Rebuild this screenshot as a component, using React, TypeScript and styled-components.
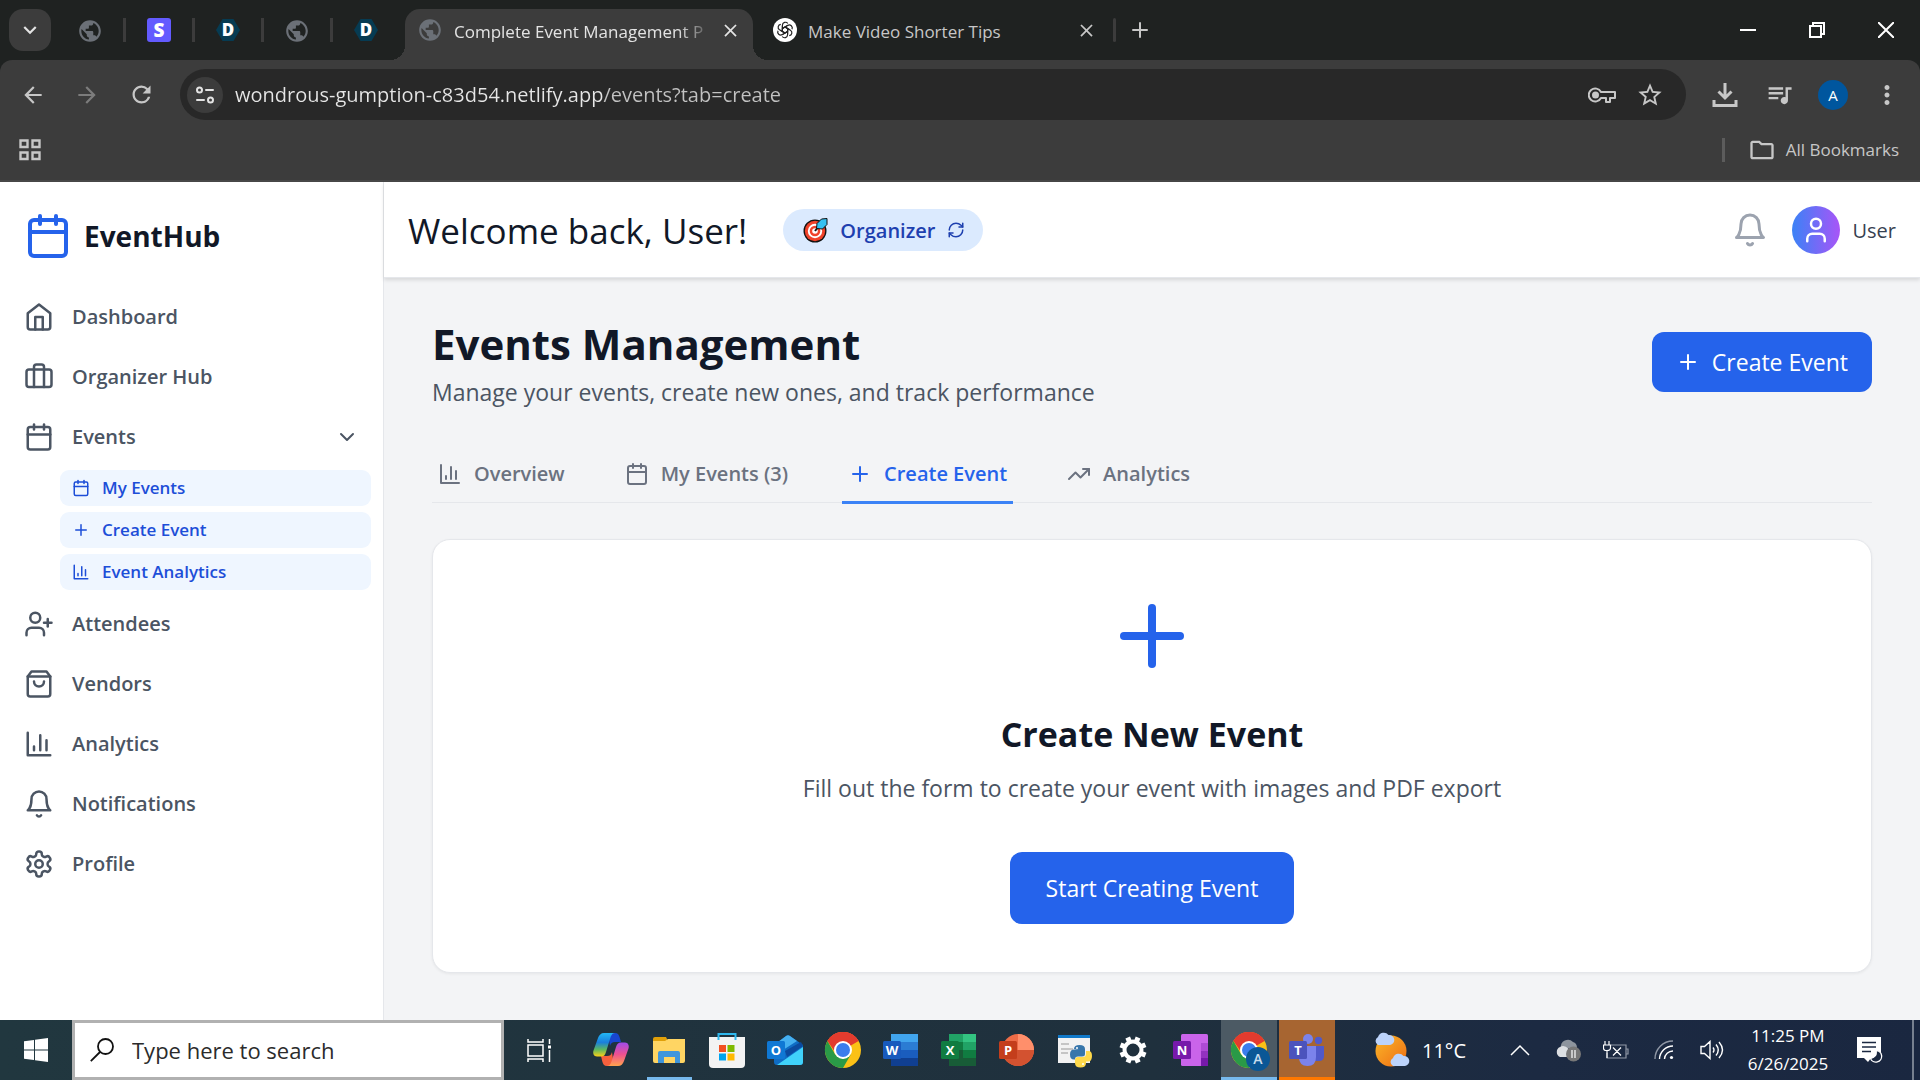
import React from "react";
import styled, { createGlobalStyle, css } from "styled-components";
import {
  Briefcase,
  Calendar,
  ChevronDown,
  Plus,
  RefreshCw,
  TrendingUp,
  User,
  UserPlus,
} from "lucide-react";
import { FiHome, FiShoppingBag } from "react-icons/fi";
import {
  MdArrowBack,
  MdArrowForward,
  MdClose,
  MdKeyboardArrowDown,
  MdMoreVert,
  MdOutlineFolder,
  MdPublic,
  MdQueueMusic,
  MdRefresh,
  MdStarBorder,
} from "react-icons/md";

const ui = `"Segoe UI", "Open Sans", "Noto Sans", sans-serif`;

const GlobalStyle = createGlobalStyle`
  *, *::before, *::after { box-sizing: border-box; }
  body { margin: 0; font-family: ${ui}; background: #f3f4f6; }
  button, input { font: inherit; color: inherit; border: 0; padding: 0; background: none; }
  button { cursor: pointer; }
  a { color: inherit; text-decoration: none; }
  h1, h2, p, ul { margin: 0; padding: 0; }
  ul { list-style: none; }
  svg { display: block; flex-shrink: 0; }
`;

const Screen = styled.div`
  display: flex;
  flex-direction: column;
  min-height: 100vh;
`;

/* ---------- Browser chrome ---------- */

const Browser = styled.header`
  background: #1f2221;
  color: #c7c7c7;
`;

const TabStrip = styled.div`
  display: flex;
  align-items: center;
  height: 60px;
  padding-left: 9px;
`;

const TabSearch = styled.button`
  display: grid;
  place-items: center;
  width: 42px;
  height: 42px;
  margin-right: 6px;
  border-radius: 14px;
  background: #3c3c3c;
  color: #e3e3e3;
`;

const PinnedTab = styled.button<{ $last?: boolean }>`
  display: grid;
  place-items: center;
  width: 69px;
  height: 24px;
  border-right: 3px solid ${(p) => (p.$last ? "transparent" : "#3c3c3c")};
`;

const Tab = styled.div<{ $active?: boolean }>`
  position: relative;
  display: flex;
  align-items: center;
  gap: 12px;
  width: 348px;
  height: 51px;
  margin: 9px 0 0 ${(p) => (p.$active ? 3 : 8)}px;
  padding: 0 12px;
  font-size: 17px;
  color: #c7c7c7;
  ${(p) =>
    p.$active &&
    css`
      color: #e3e3e3;
      background: #3c3c3c;
      border-radius: 15px 15px 0 0;
      &::before,
      &::after {
        content: "";
        position: absolute;
        bottom: 0;
        width: 15px;
        height: 15px;
      }
      &::before {
        right: 100%;
        background: radial-gradient(circle at 0 0, transparent 15px, #3c3c3c 15px);
      }
      &::after {
        left: 100%;
        background: radial-gradient(circle at 100% 0, transparent 15px, #3c3c3c 15px);
      }
    `}
`;

const TabBody = styled.button`
  display: flex;
  flex: 1;
  min-width: 0;
  align-items: center;
  gap: 11px;
  margin-top: -9px;
  text-align: left;
`;

const TabTitle = styled.span<{ $fade?: boolean }>`
  flex: 1;
  line-height: 30px;
  padding-top: 3px;
  white-space: nowrap;
  mask-image: ${(p) => (p.$fade ? "linear-gradient(to right, #000 88%, transparent 102%)" : "none")};
`;

const TabClose = styled.button`
  margin-top: -9px;
`;

const StripDivider = styled.span`
  width: 3px;
  height: 24px;
  margin: 0 12px 0 4px;
  border-radius: 2px;
  background: #3c3c3c;
`;

const WindowControls = styled.div`
  display: flex;
  margin-left: auto;
  color: #fff;
  button {
    display: grid;
    place-items: center;
    width: 69px;
    height: 58px;
  }
`;

const Toolbar = styled.div`
  background: #3c3c3c;
  border-bottom: 2px solid #474747;
  border-radius: 12px 12px 0 0;
`;

const AddressRow = styled.div`
  display: flex;
  align-items: center;
  padding: 9px 6px 0;
`;

const ToolButton = styled.button<{ $dim?: boolean }>`
  display: grid;
  place-items: center;
  width: 54px;
  height: 48px;
  color: ${(p) => (p.$dim ? "#7c7c7c" : "#c7c7c7")};
`;

const Omnibox = styled.div`
  display: flex;
  flex: 1;
  align-items: center;
  gap: 12px;
  height: 51px;
  margin: 0 12px;
  padding: 0 18px 0 7px;
  border-radius: 26px;
  background: #282828;
`;

const SiteInfo = styled.button`
  display: grid;
  place-items: center;
  width: 36px;
  height: 36px;
  border-radius: 50%;
  background: #3c3c3c;
  color: #e3e3e3;
`;

const Address = styled.input`
  flex: 1;
  min-width: 0;
  font-size: 20px;
  line-height: 30px;
  outline: 0;
  color: transparent;
  background: linear-gradient(to right, #e6e6e6 368px, #c2c2c2 368px);
  background-clip: text;
`;

const OmniButton = styled.button`
  display: grid;
  place-items: center;
  width: 36px;
  height: 36px;
`;

const Profile = styled.span`
  display: grid;
  place-items: center;
  width: 30px;
  height: 30px;
  border-radius: 50%;
  background: #00569e;
  color: #fff;
  font-size: 15px;
`;

const BookmarkRow = styled.div`
  display: flex;
  align-items: center;
  justify-content: space-between;
  height: 60px;
  padding: 0 21px 0 19px;
`;

const AllBookmarks = styled.button`
  display: flex;
  align-items: center;
  gap: 10px;
  padding-left: 23px;
  font-size: 17px;
  line-height: 30px;
  border-left: 3px solid #5c5c5c;
  height: 24px;
`;

/* ---------- Application ---------- */

const AppShell = styled.div`
  display: flex;
  flex: 1;
`;

const Sidebar = styled.aside`
  flex: 0 0 384px;
  padding: 27px 12px;
  background: #fff;
  border-right: 1px solid #e5e7eb;
`;

const Brand = styled.a`
  display: flex;
  align-items: center;
  gap: 12px;
  padding: 3px 12px 30px;
  font-size: 28px;
  font-weight: 700;
  line-height: 48px;
  color: #111827;
  svg {
    color: #2563eb;
  }
`;

const NavList = styled.ul`
  display: flex;
  flex-direction: column;
  gap: 6px;
`;

const navRow = css`
  display: flex;
  align-items: center;
  width: 100%;
  font-weight: 600;
  text-align: left;
`;

const NavLink = styled.a`
  ${navRow}
  gap: 18px;
  padding: 12px;
  font-size: 20px;
  line-height: 30px;
  color: #4b5563;
`;

const NavToggle = styled(NavLink).attrs({ as: "button" })`
  svg:last-child {
    margin-left: auto;
  }
`;

const SubList = styled(NavList)`
  padding: 6px 0 1px 48px;
`;

const SubLink = styled.a`
  ${navRow}
  gap: 12px;
  padding: 6px 12px;
  border-radius: 9px;
  background: #eff6ff;
  color: #1d4ed8;
  font-size: 17px;
  line-height: 24px;
`;

const Content = styled.div`
  display: flex;
  flex: 1;
  min-width: 0;
  flex-direction: column;
  background: #f3f4f6;
`;

const TopBar = styled.div`
  display: flex;
  align-items: center;
  height: 96px;
  padding: 1px 24px 0;
  background: #fff;
  border-bottom: 1px solid #e5e7eb;
  box-shadow: 0 2px 4px rgba(0, 0, 0, 0.12);
`;

const Welcome = styled.p`
  padding-top: 2px;
  font-size: 35px;
  line-height: 48px;
  font-weight: 500;
  color: #111827;
`;

const RolePill = styled.button`
  display: flex;
  align-items: center;
  gap: 12px;
  height: 42px;
  margin-left: 36px;
  padding: 0 18px 0 20px;
  border-radius: 21px;
  background: #dbeafe;
  color: #1e40af;
  font-size: 20px;
  font-weight: 600;
`;

const Account = styled.div`
  display: flex;
  align-items: center;
  gap: 24px;
  margin-left: auto;
  color: #9ca3af;
`;

const AccountButton = styled.button`
  display: flex;
  align-items: center;
  gap: 12px;
  font-size: 20px;
  font-weight: 500;
  color: #374151;
`;

const Avatar = styled.span`
  display: grid;
  place-items: center;
  width: 48px;
  height: 48px;
  border-radius: 50%;
  color: #fff;
  background: linear-gradient(to right, #3b82f6, #a855f7);
`;

const Main = styled.main`
  padding: 36px 48px 40px;
`;

const PageHead = styled.div`
  display: flex;
  align-items: center;
  justify-content: space-between;
`;

const PageTitle = styled.h1`
  font-size: 42px;
  line-height: 60px;
  font-weight: 700;
  color: #111827;
`;

const Lead = styled.p`
  font-size: 23px;
  line-height: 36px;
  color: #4b5563;
`;

const PrimaryButton = styled.button<{ $large?: boolean }>`
  display: flex;
  align-items: center;
  gap: 12px;
  height: ${(p) => (p.$large ? 72 : 60)}px;
  padding: 0 ${(p) => (p.$large ? 36 : 24)}px;
  border-radius: 12px;
  background: #2563eb;
  color: #fff;
  font-size: 23px;
`;

const Tabs = styled.nav`
  display: flex;
  gap: 48px;
  margin-top: 37px;
  border-bottom: 1px solid #e5e7eb;
`;

const TabLink = styled.a<{ $current?: boolean }>`
  display: flex;
  align-items: center;
  gap: 12px;
  padding: 12px 6px;
  margin-bottom: -2px;
  border-bottom: 3px solid ${(p) => (p.$current ? "#3b82f6" : "transparent")};
  color: ${(p) => (p.$current ? "#2563eb" : "#6b7280")};
  font-size: 20px;
  line-height: 30px;
  font-weight: 600;
`;

const Card = styled.section`
  display: flex;
  flex-direction: column;
  align-items: center;
  margin-top: 36px;
  padding: 48px;
  border: 1px solid #e5e7eb;
  border-radius: 18px;
  background: #fff;
  box-shadow: 0 1px 3px rgba(0, 0, 0, 0.06);
`;

const CardTitle = styled.h2`
  margin: 24px 0 10px;
  font-size: 34px;
  line-height: 52px;
  font-weight: 700;
  color: #111827;
`;

const CardActions = styled.div`
  margin-top: 46px;
`;

/* ---------- Taskbar ---------- */

const Taskbar = styled.footer`
  display: flex;
  align-items: center;
  height: 60px;
  color: #fff;
  background: linear-gradient(to right, #21373f, #1f303d 60%, #1c2a42 80%, #1a2740);
`;

const StartButton = styled.button`
  display: grid;
  place-items: center;
  width: 72px;
  height: 60px;
`;

const SearchBox = styled.label`
  display: flex;
  align-items: center;
  gap: 18px;
  width: 432px;
  height: 60px;
  padding: 0 15px;
  border: 3px solid #b1b1b1;
  background: #fff;
  color: #111;
  input {
    flex: 1;
    min-width: 0;
    font-size: 22px;
    line-height: 30px;
    outline: 0;
  }
  input::placeholder {
    color: #2b2b2b;
    opacity: 1;
  }
`;

const AppRow = styled.div`
  display: flex;
  gap: 2px;
  padding-left: 9px;
`;

const AppButton = styled.button<{ $tint?: string; $line?: string; $wide?: boolean }>`
  display: flex;
  flex-direction: column;
  align-items: center;
  width: 56px;
  height: 60px;
  padding-top: 12px;
  background: ${(p) => p.$tint ?? "transparent"};
  svg {
    overflow: visible;
  }
  &::after {
    content: "";
    width: ${(p) => (p.$wide ? 56 : 45)}px;
    height: 3px;
    margin-top: auto;
    background: ${(p) => p.$line ?? "transparent"};
  }
`;

const TaskView = styled.button`
  display: grid;
  place-items: center;
  width: 70px;
  height: 60px;
`;

const Tray = styled.div`
  display: flex;
  align-items: center;
  margin-left: auto;
  height: 60px;
`;

const Weather = styled.button`
  display: flex;
  align-items: center;
  gap: 12px;
  margin-right: 30px;
  font-size: 20px;
`;

const TrayButton = styled.button<{ $wide?: boolean }>`
  display: grid;
  place-items: center;
  width: ${(p) => (p.$wide ? 60 : 48)}px;
  height: 60px;
`;

const Clock = styled.button`
  width: 104px;
  font-size: 17px;
  line-height: 28px;
  white-space: nowrap;
`;

const ShowDesktop = styled.button`
  width: 8px;
  height: 60px;
  margin-left: 12px;
  border-left: 2px solid #77808f;
`;

/* ---------- Drawings ---------- */

type IconProps = { size?: number };

const Stroke = ({ size = 24, width = 2, children }: IconProps & { width?: number; children: React.ReactNode }) => (
  <svg width={size} height={size} viewBox="0 0 24 24" fill="none" stroke="currentColor" strokeWidth={width} strokeLinecap="round" strokeLinejoin="round" aria-hidden="true">
    {children}
  </svg>
);

const BarsIcon = ({ size }: IconProps) => (
  <Stroke size={size}>
    <path d="M3 3v18h18M18 17V9M13 17V5M8 17v-3" />
  </Stroke>
);

const BellIcon = ({ size }: IconProps) => (
  <Stroke size={size}>
    <path d="M6 8a6 6 0 0 1 12 0c0 7 3 9 3 9H3s3-2 3-9" />
    <path d="M10.3 21a1.94 1.94 0 0 0 3.4 0" />
  </Stroke>
);

const SettingsIcon = ({ size }: IconProps) => (
  <Stroke size={size}>
    <path d="M12.22 2h-.44a2 2 0 0 0-2 2v.18a2 2 0 0 1-1 1.73l-.43.25a2 2 0 0 1-2 0l-.15-.08a2 2 0 0 0-2.73.73l-.22.38a2 2 0 0 0 .73 2.73l.15.1a2 2 0 0 1 1 1.72v.51a2 2 0 0 1-1 1.74l-.15.09a2 2 0 0 0-.73 2.73l.22.38a2 2 0 0 0 2.73.73l.15-.08a2 2 0 0 1 2 0l.43.25a2 2 0 0 1 1 1.73V20a2 2 0 0 0 2 2h.44a2 2 0 0 0 2-2v-.18a2 2 0 0 1 1-1.73l.43-.25a2 2 0 0 1 2 0l.15.08a2 2 0 0 0 2.73-.73l.22-.39a2 2 0 0 0-.73-2.73l-.15-.08a2 2 0 0 1-1-1.74v-.5a2 2 0 0 1 1-1.74l.15-.09a2 2 0 0 0 .73-2.73l-.22-.38a2 2 0 0 0-2.73-.73l-.15.08a2 2 0 0 1-2 0l-.43-.25a2 2 0 0 1-1-1.73V4a2 2 0 0 0-2-2z" />
    <circle cx="12" cy="12" r="3" />
  </Stroke>
);

const GlobeIcon = () => <MdPublic size={26} color="#6b7077" />;

const StripeIcon = () => (
  <svg width="24" height="24" viewBox="0 0 24 24" aria-hidden="true">
    <rect width="24" height="24" rx="3" fill="#635bff" />
    <text x="12" y="19" textAnchor="middle" fontSize="19" fontWeight="800" fill="#fff" fontFamily="Open Sans, sans-serif">S</text>
  </svg>
);

const DodoIcon = () => (
  <svg width="24" height="24" viewBox="0 0 24 24" aria-hidden="true">
    <path d="M6.5 1h11L24 12l-6.500 11h-11L0 12z" fill="#063b52" />
    <text x="12" y="18" textAnchor="middle" fontSize="17" fontWeight="800" fill="#fff" fontFamily="Open Sans, sans-serif">D</text>
  </svg>
);

const ChatIcon = () => (
  <svg width="24" height="24" viewBox="0 0 24 24" aria-hidden="true">
    <circle cx="12" cy="12" r="12" fill="#fff" />
    <g fill="none" stroke="#222" strokeWidth="1.2" strokeLinejoin="round">
      {[0, 60, 120, 180, 240, 300].map((a) => (
        <path key={a} transform={`rotate(${a} 12 12)`} d="M9.400 13.500V7.200a3 3 0 0 1 5.400-1.700M9.400 10.500 12 9l4.800 2.800" />
      ))}
    </g>
  </svg>
);

const TuneIcon = () => (
  <Stroke size={24}>
    <circle cx="6.500" cy="7" r="2.500" />
    <path d="M13 7h7M4 17h7" />
    <circle cx="17.500" cy="17" r="2.500" />
  </Stroke>
);

const KeyIcon = () => (
  <svg width="28" height="20" viewBox="0 0 28 20" fill="none" stroke="currentColor" strokeWidth="2" aria-hidden="true">
    <path d="M13 7a6.500 6.500 0 1 0 0 6h5v4h4v-4h5V7z" strokeLinejoin="round" />
    <circle cx="7.500" cy="10" r="2.500" fill="currentColor" />
  </svg>
);

const DownloadIcon = () => (
  <svg width="26" height="26" viewBox="0 0 26 26" fill="none" stroke="currentColor" strokeWidth="3" aria-hidden="true">
    <path d="M13 1v14M6.500 9.500 13 16l6.500-6.500M2 18v5.500h22V18" />
  </svg>
);

const GridIcon = () => (
  <svg width="22" height="22" viewBox="0 0 22 22" fill="none" stroke="currentColor" strokeWidth="2.400" aria-hidden="true">
    <path d="M1.500 1.500h7v6.500h-7zM13.500 1.500h7v6.500h-7zM1.500 13.500h7v6.500h-7zM13.500 13.500h7v6.500h-7z" />
  </svg>
);

const TargetIcon = () => (
  <svg width="25" height="25" viewBox="0 0 25 25" aria-hidden="true">
    <circle cx="12" cy="13" r="11.500" fill="#111" />
    <circle cx="12" cy="13" r="10.200" fill="#f0432a" />
    <circle cx="12" cy="13" r="7.200" fill="#fff" />
    <circle cx="12" cy="13" r="5.300" fill="#f0432a" />
    <circle cx="12" cy="13" r="2.800" fill="#fff" />
    <path d="m12 13 4-5" stroke="#111" strokeWidth="2" />
    <path d="m13.500 10.500.5-5 4.500-4.500 5.500-.5v6l-4.500 4.500z" fill="#35c1f1" stroke="#111" strokeWidth="1" />
  </svg>
);

const WindowsIcon = () => (
  <svg width="24" height="24" viewBox="0 0 24 24" fill="#fff" aria-hidden="true">
    <path d="M0 3.300 10 2v9.500H0zM11 1.800 24 0v11.500H11zM0 12.500h10V22L0 20.700zM11 12.500h13V24l-13-1.800z" />
  </svg>
);

const SearchIcon = () => (
  <svg width="24" height="24" viewBox="0 0 24 24" fill="none" stroke="#111" strokeWidth="1.800" aria-hidden="true">
    <circle cx="15.500" cy="8.500" r="7.500" />
    <path d="M10 14 .8 23.200" />
  </svg>
);

const TaskViewIcon = () => (
  <svg width="24" height="24" viewBox="0 0 24 24" fill="none" stroke="#fff" strokeWidth="1.500" aria-hidden="true">
    <path d="M1 1v3h15V1M1 7h15v11H1zM1 24v-3h15v3M22.500 1v5M22.500 12v12" />
    <path d="M22.500 7.500v3" strokeWidth="3" />
  </svg>
);

const CopilotIcon = () => (
  <svg width="36" height="36" viewBox="0 0 36 36" aria-hidden="true">
    <defs>
      <linearGradient id="copA" x1="0" y1="0" x2="0" y2="1">
        <stop offset="0" stopColor="#22b8f5" />
        <stop offset=".4" stopColor="#1a7fdc" />
        <stop offset=".7" stopColor="#5cb860" />
        <stop offset="1" stopColor="#fcd116" />
      </linearGradient>
      <linearGradient id="copB" x1="0" y1="0" x2="0" y2="1">
        <stop offset="0" stopColor="#a04bea" />
        <stop offset=".5" stopColor="#ee5090" />
        <stop offset="1" stopColor="#ffa34d" />
      </linearGradient>
    </defs>
    <path d="M15 1h7c3 0 4 2 4.700 4.500L28 10h-6c-3 0-4 1-5 4z" fill="#1846cf" />
    <path d="M21 34h-7c-3 0-4-2-4.700-4.500L8 24h6c3 0 4-1 5-4z" fill="#f5603d" />
    <path d="M11 1h11c-3 0-4 3-5 6l-4 13c-1 3-2 4.500-5 4.500H4c-3 0-4.500-3-3.500-6L5 6c1-3 3-5 6-5z" fill="url(#copA)" />
    <path d="M25 34H14c3 0 4-3 5-6l4-13c1-3 2-4.500 5-4.500h4c3 0 4.500 3 3.500 6L31 29c-1 3-3 5-6 5z" fill="url(#copB)" />
  </svg>
);

const ExplorerIcon = () => (
  <svg width="34" height="36" viewBox="0 0 34 36" aria-hidden="true">
    <path d="M1 7q0-2 2-2h11l2 4h-3L1 14z" fill="#e0a009" />
    <path d="M1 9h12l3-2h17v22q0 2-2 2H3q-2 0-2-2z" fill="#ffd563" />
    <path d="M6 31V21q0-2 2-2h18q2 0 2 2v10h-5v-6H12v6z" fill="#3f96dc" />
  </svg>
);

const StoreIcon = () => (
  <svg width="36" height="36" viewBox="0 0 36 36" aria-hidden="true">
    <path d="M0 5h36v27q0 4-4 4H4q-4 0-4-4z" fill="#f3f3f3" />
    <path d="M9.500 8V2h17v6" fill="none" stroke="#2fb8ee" strokeWidth="2" />
    <path d="M10 13h7v7h-7z" fill="#f25022" />
    <path d="M18.500 13h7v7h-7z" fill="#7fba00" />
    <path d="M10 21.500h7v7h-7z" fill="#00a4ef" />
    <path d="M18.500 21.500h7v7h-7z" fill="#ffb900" />
  </svg>
);

const Letter = ({ fill, children }: { fill: string; children: string }) => (
  <>
    <rect x="0" y="9" width="18" height="18" rx="1.500" fill={fill} />
    <text x="9" y="22.500" textAnchor="middle" fontSize="13" fontWeight="700" fill="#fff" fontFamily="Open Sans, sans-serif">
      {children}
    </text>
  </>
);

const OutlookIcon = () => (
  <svg width="36" height="36" viewBox="0 0 36 36" aria-hidden="true">
    <path d="M7 13 19 4q2-1.500 4 0l13 9v17q0 3-3 3H10q-3 0-3-3z" fill="#0f6cc4" />
    <path d="m11 10 8-6q2-1.500 4 0l7 5-14 9z" fill="#45b0f0" />
    <path d="m18 19 16-9 2 4-16 11z" fill="#0b4a9e" />
    <path d="m36 15v15q0 3-3 3H10z" fill="#40d2fa" />
    <Letter fill="#0f78d4">O</Letter>
  </svg>
);

const ChromeIcon = ({ badge }: { badge?: boolean }) => (
  <svg width="36" height="40" viewBox="0 0 36 40" aria-hidden="true">
    <circle cx="18" cy="18" r="18" fill="#fbc116" />
    <path d="M18 18 2.400 9A18 18 0 0 1 33.600 9z" fill="#e33b2e" />
    <path d="M18 9h15.600A18 18 0 0 0 2.400 9l7 10z" fill="#e33b2e" />
    <path d="M2.400 9A18 18 0 0 0 18 36l7.800-13.500L18 27l-7.800-4.500z" fill="#2a9a47" />
    <circle cx="18" cy="18" r="9" fill="#fff" />
    <circle cx="18" cy="18" r="7" fill="#3b7ded" />
    {badge && (
      <>
        <circle cx="27" cy="27" r="12" fill="#0a5796" />
        <text x="27" y="32" textAnchor="middle" fontSize="14" fontWeight="600" fill="#c6dcec" fontFamily="Open Sans, sans-serif">A</text>
      </>
    )}
  </svg>
);

const BandIcon = ({ letter, fill, bands }: { letter: string; fill: string; bands: string[] }) => (
  <svg width="36" height="36" viewBox="0 0 36 36" aria-hidden="true">
    {bands.map((b, i) => (
      <path key={b} d={`M8 ${2 + i * 8}h27v8H8z`} fill={b} />
    ))}
    <Letter fill={fill}>{letter}</Letter>
  </svg>
);

const ExcelIcon = () => (
  <svg width="36" height="36" viewBox="0 0 36 36" aria-hidden="true">
    <path d="M8 2h14v8H8z" fill="#21a366" />
    <path d="M22 2h13v8H22z" fill="#33c481" />
    <path d="M8 10h14v8H8z" fill="#107c41" />
    <path d="M22 10h13v8H22z" fill="#21a366" />
    <path d="M8 18h14v8H8z" fill="#185c37" />
    <path d="M22 18h13v8H22z" fill="#107c41" />
    <path d="M8 26h27v8H8z" fill="#185c37" />
    <Letter fill="#107c41">X</Letter>
  </svg>
);

const PowerPointIcon = () => (
  <svg width="36" height="36" viewBox="0 0 36 36" aria-hidden="true">
    <circle cx="19" cy="18" r="16" fill="#ed6c47" />
    <path d="M19 2a16 16 0 0 1 16 16H19z" fill="#ff8f6b" />
    <path d="M3 18h32a16 16 0 0 1-32 0z" fill="#d35230" />
    <Letter fill="#c43e1c">P</Letter>
  </svg>
);

const OneNoteIcon = () => (
  <svg width="36" height="36" viewBox="0 0 36 36" aria-hidden="true">
    <rect x="8" y="2" width="27" height="32" rx="1.500" fill="#ca64ea" />
    <path d="M28 11h7v8h-7z" fill="#ae4bd5" />
    <path d="M28 19h7v7h-7z" fill="#9332bf" />
    <path d="M28 26h7v8h-7z" fill="#7719aa" />
    <Letter fill="#7719aa">N</Letter>
  </svg>
);

const PythonIcon = () => (
  <svg width="36" height="36" viewBox="0 0 36 36" aria-hidden="true">
    <path d="M1 3h32v28H1z" fill="#f2f2f2" />
    <path d="M1 3h32v3H1z" fill="#1179c9" />
    <path d="M4 12h8M4 17h12M4 21h7" stroke="#b7b7b7" strokeWidth="1.500" />
    <path d="M17 17q0-4 5.500-4t5.500 4v5q0 2.500-3 2.500h-4q-3 0-3 3h-1q-4 0-4-5t4-5h5z" fill="#3776ab" />
    <path d="M18 31q0 4.500 5.500 4.500T29 31v-1.500h2q4 0 4-5.500t-4-5h-2v3q0 3-3 3h-5q-3 0-3 3z" fill="#ffd94a" />
    <circle cx="20" cy="16" r="1" fill="#fff" />
    <circle cx="26" cy="32" r="1" fill="#fff" />
  </svg>
);

const CogIcon = () => (
  <svg width="28" height="36" viewBox="0 0 28 36" fill="none" stroke="#fff" aria-hidden="true">
    <circle cx="14" cy="18" r="8.500" strokeWidth="4" />
    {[22, 67, 112, 157, 202, 247, 292, 337].map((a) => (
      <path key={a} transform={`rotate(${a} 14 18)`} d="M14 8.500V4.500" strokeWidth="5" />
    ))}
  </svg>
);

const TeamsIcon = () => (
  <svg width="36" height="36" viewBox="0 0 36 36" aria-hidden="true">
    <circle cx="29.500" cy="8.500" r="3.700" fill="#5059c9" />
    <path d="M24 14h11v10q0 5-5 5h-6z" fill="#5059c9" />
    <circle cx="19" cy="7" r="5" fill="#7b83eb" />
    <path d="M10 14h17v11q0 9-8.500 9T10 25z" fill="#7b83eb" />
    <Letter fill="#4b53bc">T</Letter>
  </svg>
);

const cloudPath = "M5 14a4.500 4.500 0 0 1 0-8 6 6 0 0 1 10.500-2A5 5 0 0 1 17 14z";

const WeatherIcon = () => (
  <svg width="37" height="38" viewBox="0 0 37 38" aria-hidden="true">
    <defs>
      <linearGradient id="sun" x1="0" y1="0" x2="1" y2="1">
        <stop offset="0" stopColor="#fbb829" />
        <stop offset="1" stopColor="#ee6c14" />
      </linearGradient>
    </defs>
    <circle cx="18" cy="20" r="15.500" fill="url(#sun)" />
    <path d={cloudPath} fill="#bcd3fb" />
    <path d={cloudPath} transform="translate(15 21)" fill="#bcd3fb" />
  </svg>
);

const OneDriveIcon = () => (
  <svg width="26" height="24" viewBox="0 0 26 24" aria-hidden="true">
    <path d="M6 10a7 7 0 0 1 12-6q4 1 4 6z" fill="#8d949d" />
    <path d="M5 19a5.500 5.500 0 0 1 0-10q7-4 14 10z" fill="#dcdfe2" />
    <circle cx="18.500" cy="16" r="7.500" fill="#777" />
    <path d="M17 12v8M20 12v8" stroke="#fff" strokeWidth="1.200" />
  </svg>
);

const BatteryIcon = () => (
  <svg width="26" height="20" viewBox="0 0 26 20" fill="none" stroke="#fff" strokeWidth="1.200" aria-hidden="true">
    <path d="M8 5h15v13H4v-5M23 9h2v5h-2" stroke="#8f97a5" />
    <path d="M2 1v4M6 1v4M.5 5h7v3q0 2.500-3.500 2.500T.5 8zM4 10.500V18M10 7.500l8 8M18 7.500l-8 8" />
  </svg>
);

const WifiIcon = () => (
  <svg width="20" height="20" viewBox="0 0 20 20" fill="none" stroke="#fff" strokeWidth="1.400" aria-hidden="true">
    <path d="M1 19A18 18 0 0 1 19 1" stroke="#8f97a5" />
    <path d="M5.500 19A13.500 13.500 0 0 1 19 6M10.500 19A8.500 8.500 0 0 1 19 11" />
    <circle cx="17.500" cy="17.500" r="1.600" fill="#fff" stroke="none" />
  </svg>
);

const SpeakerIcon = () => (
  <svg width="24" height="20" viewBox="0 0 24 20" fill="none" stroke="#fff" strokeWidth="1.400" aria-hidden="true">
    <path d="M1 6.500h3.500L10 1.500v17l-5.500-5H1zM13 7.500q2 2.500 0 5M16 4.500q4.500 5.500 0 11M19 2q7 8 0 16" />
  </svg>
);

const NoticeIcon = () => (
  <svg width="26" height="26" viewBox="0 0 26 26" aria-hidden="true">
    <path d="M0 0h24v15l-4 6h-6l-3 4-4-4H0z" fill="#fff" />
    <path d="M5 5.500h14M5 10h14M5 14.500h9" stroke="#1b2841" strokeWidth="1.300" />
    <path d="M19 13.500q1.500 6.500-5.500 8a5.800 5.800 0 1 0 5.500-8z" fill="#1b2841" stroke="#fff" strokeWidth="1.300" />
  </svg>
);

/* ---------- Screen ---------- */

const navTop = [
  { label: "Dashboard", icon: <FiHome size={30} /> },
  { label: "Organizer Hub", icon: <Briefcase size={30} /> },
];

const navEvents = [
  { label: "My Events", icon: <Calendar size={18} /> },
  { label: "Create Event", icon: <Plus size={18} /> },
  { label: "Event Analytics", icon: <BarsIcon size={18} /> },
];

const navBottom = [
  { label: "Attendees", icon: <UserPlus size={30} /> },
  { label: "Vendors", icon: <FiShoppingBag size={30} /> },
  { label: "Analytics", icon: <BarsIcon size={30} /> },
  { label: "Notifications", icon: <BellIcon size={30} /> },
  { label: "Profile", icon: <SettingsIcon size={30} /> },
];

const tabs = [
  { label: "Overview", icon: <BarsIcon size={24} /> },
  { label: "My Events (3)", icon: <Calendar size={24} /> },
  { label: "Create Event", icon: <Plus size={24} />, current: true },
  { label: "Analytics", icon: <TrendingUp size={24} /> },
];

const pinned = [
  { label: "Site", icon: <GlobeIcon /> },
  { label: "Stripe", icon: <StripeIcon /> },
  { label: "Dashboard D", icon: <DodoIcon /> },
  { label: "Site", icon: <GlobeIcon /> },
  { label: "Dashboard D", icon: <DodoIcon /> },
];

const apps = [
  { label: "Copilot", icon: <CopilotIcon /> },
  { label: "File Explorer", icon: <ExplorerIcon />, line: "#76b9ed" },
  { label: "Microsoft Store", icon: <StoreIcon /> },
  { label: "Outlook", icon: <OutlookIcon /> },
  { label: "Chrome", icon: <ChromeIcon /> },
  { label: "Word", icon: <BandIcon letter="W" fill="#185abd" bands={["#41a5ee", "#2b7cd3", "#1a5dbe", "#103f91"]} /> },
  { label: "Excel", icon: <ExcelIcon /> },
  { label: "PowerPoint", icon: <PowerPointIcon /> },
  { label: "IDLE", icon: <PythonIcon /> },
  { label: "Settings", icon: <CogIcon /> },
  { label: "OneNote", icon: <OneNoteIcon /> },
  { label: "Chrome profile", icon: <ChromeIcon badge />, tint: "#4c5a64", line: "#76b9ed", wide: true },
  { label: "Teams", icon: <TeamsIcon />, tint: "#a76531", line: "#ff7800", wide: true },
];

function BrowserChrome() {
  return (
    <Browser>
      <TabStrip>
        <TabSearch aria-label="Search tabs"><MdKeyboardArrowDown size={26} /></TabSearch>
        {pinned.map((p, i) => (
          <PinnedTab key={i} aria-label={p.label} $last={i === pinned.length - 1}>{p.icon}</PinnedTab>
        ))}
        <Tab $active>
          <TabBody>
            <GlobeIcon />
            <TabTitle $fade>Complete Event Management P</TabTitle>
          </TabBody>
          <TabClose aria-label="Close tab"><MdClose size={21} /></TabClose>
        </Tab>
        <Tab>
          <TabBody>
            <ChatIcon />
            <TabTitle>Make Video Shorter Tips</TabTitle>
          </TabBody>
          <TabClose aria-label="Close tab"><MdClose size={21} /></TabClose>
        </Tab>
        <StripDivider />
        <button aria-label="New tab"><Plus size={24} /></button>
        <WindowControls>
          <button aria-label="Minimize">
            <svg width="16" height="16" viewBox="0 0 16 16" stroke="#fff" strokeWidth="2"><path d="M0 8h16" /></svg>
          </button>
          <button aria-label="Restore">
            <svg width="16" height="16" viewBox="0 0 16 16" fill="none" stroke="#fff" strokeWidth="2"><path d="M1 4h11v11H1zM4 4V1h11v11h-3" /></svg>
          </button>
          <button aria-label="Close">
            <svg width="16" height="16" viewBox="0 0 16 16" stroke="#fff" strokeWidth="2"><path d="m0 0 16 16M16 0 0 16" /></svg>
          </button>
        </WindowControls>
      </TabStrip>
      <Toolbar>
        <AddressRow>
          <ToolButton aria-label="Back"><MdArrowBack size={26} /></ToolButton>
          <ToolButton aria-label="Forward" $dim><MdArrowForward size={26} /></ToolButton>
          <ToolButton aria-label="Reload"><MdRefresh size={27} /></ToolButton>
          <Omnibox>
            <SiteInfo aria-label="Site information"><TuneIcon /></SiteInfo>
            <Address aria-label="Address" defaultValue="wondrous-gumption-c83d54.netlify.app/events?tab=create" />
            <OmniButton aria-label="Passwords"><KeyIcon /></OmniButton>
            <OmniButton aria-label="Bookmark"><MdStarBorder size={28} /></OmniButton>
          </Omnibox>
          <ToolButton aria-label="Downloads"><DownloadIcon /></ToolButton>
          <ToolButton aria-label="Media"><MdQueueMusic size={29} /></ToolButton>
          <ToolButton aria-label="Account"><Profile>A</Profile></ToolButton>
          <ToolButton aria-label="Menu"><MdMoreVert size={30} /></ToolButton>
        </AddressRow>
        <BookmarkRow>
          <button aria-label="Apps"><GridIcon /></button>
          <AllBookmarks><MdOutlineFolder size={28} />All Bookmarks</AllBookmarks>
        </BookmarkRow>
      </Toolbar>
    </Browser>
  );
}

function SideNav() {
  return (
    <Sidebar>
      <Brand href="#"><Calendar size={48} />EventHub</Brand>
      <NavList>
        {navTop.map((n) => (
          <li key={n.label}><NavLink href="#">{n.icon}{n.label}</NavLink></li>
        ))}
        <li>
          <NavToggle aria-expanded="true">
            <Calendar size={30} />Events<ChevronDown size={24} />
          </NavToggle>
          <SubList>
            {navEvents.map((n) => (
              <li key={n.label}><SubLink href="#">{n.icon}{n.label}</SubLink></li>
            ))}
          </SubList>
        </li>
        {navBottom.map((n) => (
          <li key={n.label}><NavLink href="#">{n.icon}{n.label}</NavLink></li>
        ))}
      </NavList>
    </Sidebar>
  );
}

function WindowsTaskbar() {
  return (
    <Taskbar>
      <StartButton aria-label="Start"><WindowsIcon /></StartButton>
      <SearchBox>
        <SearchIcon />
        <input type="text" aria-label="Search" placeholder="Type here to search" />
      </SearchBox>
      <TaskView aria-label="Task view"><TaskViewIcon /></TaskView>
      <AppRow>
        {apps.map((a) => (
          <AppButton key={a.label} aria-label={a.label} $tint={a.tint} $line={a.line} $wide={a.wide}>{a.icon}</AppButton>
        ))}
      </AppRow>
      <Tray>
        <Weather><WeatherIcon />11°C</Weather>
        <TrayButton aria-label="Hidden icons">
          <svg width="20" height="12" viewBox="0 0 20 12" fill="none" stroke="#fff" strokeWidth="1.500"><path d="m1 11 9-9 9 9" /></svg>
        </TrayButton>
        <TrayButton aria-label="OneDrive"><OneDriveIcon /></TrayButton>
        <TrayButton aria-label="Battery"><BatteryIcon /></TrayButton>
        <TrayButton aria-label="Network"><WifiIcon /></TrayButton>
        <TrayButton aria-label="Volume"><SpeakerIcon /></TrayButton>
        <Clock>11:25 PM<br />6/26/2025</Clock>
        <TrayButton aria-label="Notifications" $wide><NoticeIcon /></TrayButton>
        <ShowDesktop aria-label="Show desktop" />
      </Tray>
    </Taskbar>
  );
}

export default function App() {
  return (
    <Screen>
      <GlobalStyle />
      <BrowserChrome />
      <AppShell>
        <SideNav />
        <Content>
          <TopBar>
            <Welcome>Welcome back, User!</Welcome>
            <RolePill><TargetIcon />Organizer<RefreshCw size={18} /></RolePill>
            <Account>
              <button aria-label="Notifications"><BellIcon size={36} /></button>
              <AccountButton><Avatar><User size={30} /></Avatar>User</AccountButton>
            </Account>
          </TopBar>
          <Main>
            <PageHead>
              <div>
                <PageTitle>Events Management</PageTitle>
                <Lead>Manage your events, create new ones, and track performance</Lead>
              </div>
              <PrimaryButton><Plus size={24} />Create Event</PrimaryButton>
            </PageHead>
            <Tabs>
              {tabs.map((t) => (
                <TabLink key={t.label} href="#" $current={t.current}>{t.icon}{t.label}</TabLink>
              ))}
            </Tabs>
            <Card>
              <Plus size={96} color="#2563eb" />
              <CardTitle>Create New Event</CardTitle>
              <Lead>Fill out the form to create your event with images and PDF export</Lead>
              <CardActions>
                <PrimaryButton $large>Start Creating Event</PrimaryButton>
              </CardActions>
            </Card>
          </Main>
        </Content>
      </AppShell>
      <WindowsTaskbar />
    </Screen>
  );
}
